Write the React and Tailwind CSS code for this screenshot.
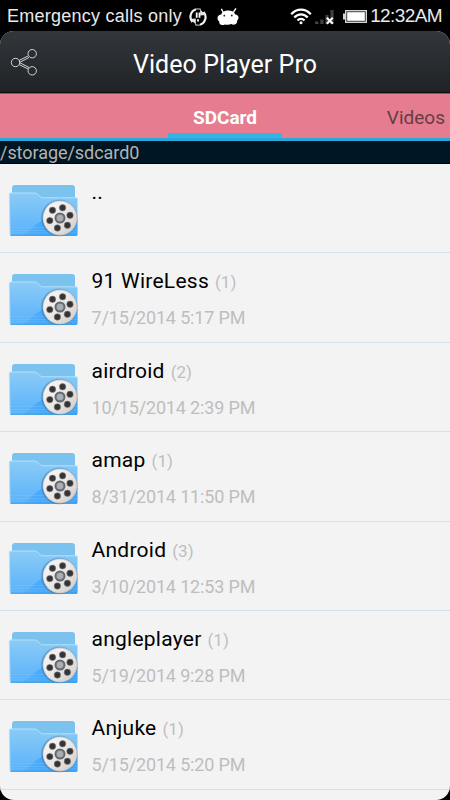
import React from 'react';

const folders = [
    { name: '..' },
    { name: '91 WireLess', count: 1, date: '7/15/2014 5:17 PM' },
    { name: 'airdroid', count: 2, date: '10/15/2014 2:39 PM' },
    { name: 'amap', count: 1, date: '8/31/2014 11:50 PM' },
    { name: 'Android', count: 3, date: '3/10/2014 12:53 PM' },
    { name: 'angleplayer', count: 1, date: '5/19/2014 9:28 PM' },
    { name: 'Anjuke', count: 1, date: '5/15/2014 5:20 PM' },
];

function SyncIcon() {
    return (
        <svg className="h-[18px] w-[18px] shrink-0" viewBox="0 0 18 18" fill="none">
            <path d="M7 1.300A7.800 7.800 0 0 0 3.500 14" stroke="#f2f2f2" strokeWidth="2.200" />
            <path d="M11 16.700A7.800 7.800 0 0 0 14.500 4" stroke="#f2f2f2" strokeWidth="2.200" />
            <path d="M7 1.200A7.700 7.700 0 0 1 12 1.300M11 16.800A7.700 7.700 0 0 1 6 16.700" stroke="#aaa" strokeWidth="1.300" />
            <path d="M1.300 11 6.800 10.500v6z" fill="#e8e8e8" />
            <path d="M16.700 7 11.200 7.500v-6z" fill="#e8e8e8" />
            <path d="M7.700 4.500v5.300M10.500 4.500v5.300M9 11.300v2.200" stroke="#fff" strokeWidth="1.800" />
        </svg>
    );
}

function RobotIcon() {
    return (
        <svg className="h-[18px] w-[22px] shrink-0" viewBox="0 0 22 18">
            <path d="M4.600 1.300 6.300 4.500M18.600.800l-2.300 3.500" stroke="#fff" strokeWidth="1.400" strokeLinecap="round" />
            <path d="M4.300 6.500C5 3.500 8 2.500 11.300 2.500s6 1.200 7 4c1.800.1 3.200 1.300 3.200 3.100 0 1.400-.6 2.300-1.300 2.900.2 2.300-1.100 4.200-3.500 4.200-.9 0-1.700-.2-2.300-.6-2.200.9-4.400.9-6.600.3-.6.6-1.500.8-2.400.7-2.300-.1-3.400-1.800-3.200-3.900C1 12.600.4 11.400.5 9.900.7 7.900 2.200 6.500 4.300 6.500z" fill="#fff" />
            <circle cx="7.300" cy="7.700" r=".9" fill="#222" />
            <circle cx="14.800" cy="7.500" r=".9" fill="#222" />
        </svg>
    );
}

function WifiIcon() {
    return (
        <svg className="h-[17px] w-[22px] shrink-0" viewBox="0 0 22 17" fill="none" stroke="#fff" strokeWidth="2.200">
            <path d="M1.200 6.300C6.700.1 15.300.1 20.800 6.300M4.300 9.500c3.700-4.200 9.700-4.200 13.400 0M7.500 12.500c1.900-2.200 5.100-2.200 7 0" />
            <circle cx="11" cy="14.700" r="1.500" fill="#fff" stroke="none" />
        </svg>
    );
}

function SignalIcon() {
    return (
        <svg className="h-4 w-5 shrink-0" viewBox="0 0 20 16">
            <path d="M0 12.500h3.500V15H0zM5.300 10.500h3.200V15H5.300zM10.400 6h3.200v9h-3.200zM15.400 1h3.200v14h-3.200z" fill="#414141" />
            <path d="m11.800 8.700 6 6M17.800 8.700l-6 6" stroke="#fff" strokeWidth="2" />
        </svg>
    );
}

function BatteryIcon() {
    return (
        <svg className="h-[15px] w-6 shrink-0" viewBox="0 0 24 15">
            <path d="M0 4.500h2V1h22v13H2v-3.500H0z" fill="#d4d4d4" />
            <path d="M3.300 2.300h19.400v10.400H3.300z" fill="#333" />
            <path d="M4.200 3.200h17.600v8.600H4.200z" fill="#fff" />
        </svg>
    );
}

function ShareIcon() {
    return (
        <svg className="h-7 w-7" viewBox="0 0 28 28" fill="none" stroke="#d2d4d6" strokeWidth="1">
            <path d="m9 12.500 9-4.500M9.800 14.300l9.200-4.800M9.800 14.700l9.200 4.800M9 16.500l9 4.500" />
            <circle cx="5.500" cy="14.500" r="4.200" />
            <circle cx="22.200" cy="5.700" r="4.200" />
            <circle cx="22.200" cy="22.800" r="4.200" />
        </svg>
    );
}

function FolderIcon() {
    return (
        <svg className="h-[54px] w-[72px]" viewBox="8 184 72 54">
            <defs>
                <linearGradient id="front" x1="0" y1="0" x2="0" y2="1">
                    <stop offset="0" stopColor="#8bcbf6" />
                    <stop offset="1" stopColor="#59b2fb" />
                </linearGradient>
                <linearGradient id="wave" x1="0" y1="0" x2="1" y2="0">
                    <stop offset="0" stopColor="#36a0fa" stopOpacity="0.3" />
                    <stop offset="0.6" stopColor="#36a0fa" />
                    <stop offset="1" stopColor="#36a0fa" />
                </linearGradient>
                <linearGradient id="metal" x1="0" y1="0" x2="1" y2="1">
                    <stop offset="0" stopColor="#fafafa" />
                    <stop offset="0.55" stopColor="#e8e6e4" />
                    <stop offset="1" stopColor="#ccc8c6" />
                </linearGradient>
                <radialGradient id="shade">
                    <stop offset="0.84" stopColor="#28598a" stopOpacity="0.7" />
                    <stop offset="1" stopColor="#28598a" stopOpacity="0" />
                </radialGradient>
            </defs>
            <path d="M12 198v-10a3 3 0 0 1 3-3h57a3 3 0 0 1 3 3v16H12z" fill="#7bc2ee" />
            <path d="M9.300 194.500q0-1.500 1.500-1.500h24q1.800 0 3 1.300l2.300 2.500q1 1 2.500 1H76q1.500 0 1.500 1.500V234q0 1.500-1.500 1.500H11.500q-1.500 0-1.500-1.500z" fill="url(#front)" stroke="#b5e1fc" strokeWidth="1" />
            <path d="M21 235.500C32 231 35 222 45 220h32.500v14q0 1.500-1.500 1.500z" fill="url(#wave)" opacity=".8" />
            <path d="M10 227.500h67M10 230.500h67M10 233h67" stroke="#8dcbff" strokeWidth=".7" opacity=".4" />
            <path d="M10.500 235.300h66.500" stroke="#369cde" strokeWidth="1" />
            <circle cx="59.300" cy="218" r="19" fill="url(#shade)" />
            <circle cx="60" cy="218" r="17.200" fill="url(#metal)" />
            <circle cx="60" cy="218" r="16.900" fill="none" stroke="#b6b2b0" strokeWidth=".5" />
            <circle cx="60" cy="218" r="5.500" fill="#66696b" />
            <circle cx="60" cy="218" r="3.800" fill="#a9afb5" stroke="#5b5d60" strokeWidth=".5" />
            <g fill="#343436" stroke="#7c7978" strokeWidth=".6">
                <circle cx="52.500" cy="210.300" r="3.200" />
                <circle cx="62.600" cy="207.800" r="3.200" />
                <circle cx="70" cy="215.300" r="3.200" />
                <circle cx="67.400" cy="225.300" r="3.200" />
                <circle cx="57.400" cy="228" r="3.200" />
                <circle cx="49.800" cy="220.600" r="3.200" />
            </g>
        </svg>
    );
}

function StatusBar() {
    return (
        <div className="flex h-[31px] shrink-0 items-center bg-black pl-[7px] pr-[8px] pt-[2px] font-['Liberation_Sans',sans-serif] text-[#e9e9e9]">
            <span className="w-[182px] whitespace-nowrap text-[18px] tracking-[0.25px]">Emergency calls only</span>
            <SyncIcon />
            <span className="ml-[10px] flex"><RobotIcon /></span>
            <span className="ml-auto flex"><WifiIcon /></span>
            <span className="ml-[3px] flex"><SignalIcon /></span>
            <span className="ml-[8px] flex"><BatteryIcon /></span>
            <span className="ml-[3px] whitespace-nowrap text-[19px] tracking-[-0.6px]">12:32AM</span>
        </div>
    );
}

function FolderRow({ folder }) {
    return (
        <div className="flex h-[89.4px] shrink-0 border-b border-[#d5e0e8] pl-[7.500px] pt-[20px]">
            <FolderIcon />
            <div className="ml-[12px] whitespace-nowrap">
                <div className="-mt-[6px] flex h-[28px] items-baseline leading-[28px]">
                    <span className="text-[21px] tracking-[0.25px] text-black">{folder.name}</span>
                    {folder.count && (
                        <span className="ml-[6px] text-[17px] text-[#bebebe]">({folder.count})</span>
                    )}
                </div>
                {folder.date && (
                    <div className="mt-[11px] text-[18px] leading-[24px] tracking-[-0.15px] text-[#bebebe]">{folder.date}</div>
                )}
            </div>
        </div>
    );
}

function App() {
    return (
        <div className="h-[800px] w-[450px] overflow-hidden bg-black font-[Roboto,sans-serif]">
            <StatusBar />
            <div className="flex h-[769px] flex-col overflow-hidden rounded-[14px] bg-[#f3f3f3]">
                <header className="grid h-[62px] shrink-0 grid-cols-[40px_1fr_40px] items-center border-b border-[#0c0d0e] bg-linear-to-b from-[#32373c] to-[#202326] pl-[10px] pr-[10px]">
                    <div className="pt-[1px]"><ShareIcon /></div>
                    <h1 className="pt-[6px] text-center text-[25px] leading-[30px] tracking-[0.08px] text-white">Video Player Pro</h1>
                </header>
                <nav className="grid h-[48px] shrink-0 grid-cols-[168px_114px_1fr] border-b-[3px] border-t border-b-[#2ca8d8] border-t-[#8f5561] bg-[#e57c90]">
                    <span />
                    <span className="h-[44px] border-b-[5px] border-[#33b5e5] pt-[12px] text-center text-[19px] font-bold leading-[24px] text-white">SDCard</span>
                    <span className="pr-[5px] pt-[12px] text-right text-[19px] leading-[24px] text-[#673c44]">Videos</span>
                </nav>
                <div className="h-[23px] shrink-0 border-b border-black bg-[#001624] text-[18px] leading-[24px] tracking-[-0.05px] text-[#b4b4b0]">/storage/sdcard0</div>
                {folders.map((folder) => (
                    <FolderRow key={folder.name} folder={folder} />
                ))}
            </div>
        </div>
    );
}

export default App;
